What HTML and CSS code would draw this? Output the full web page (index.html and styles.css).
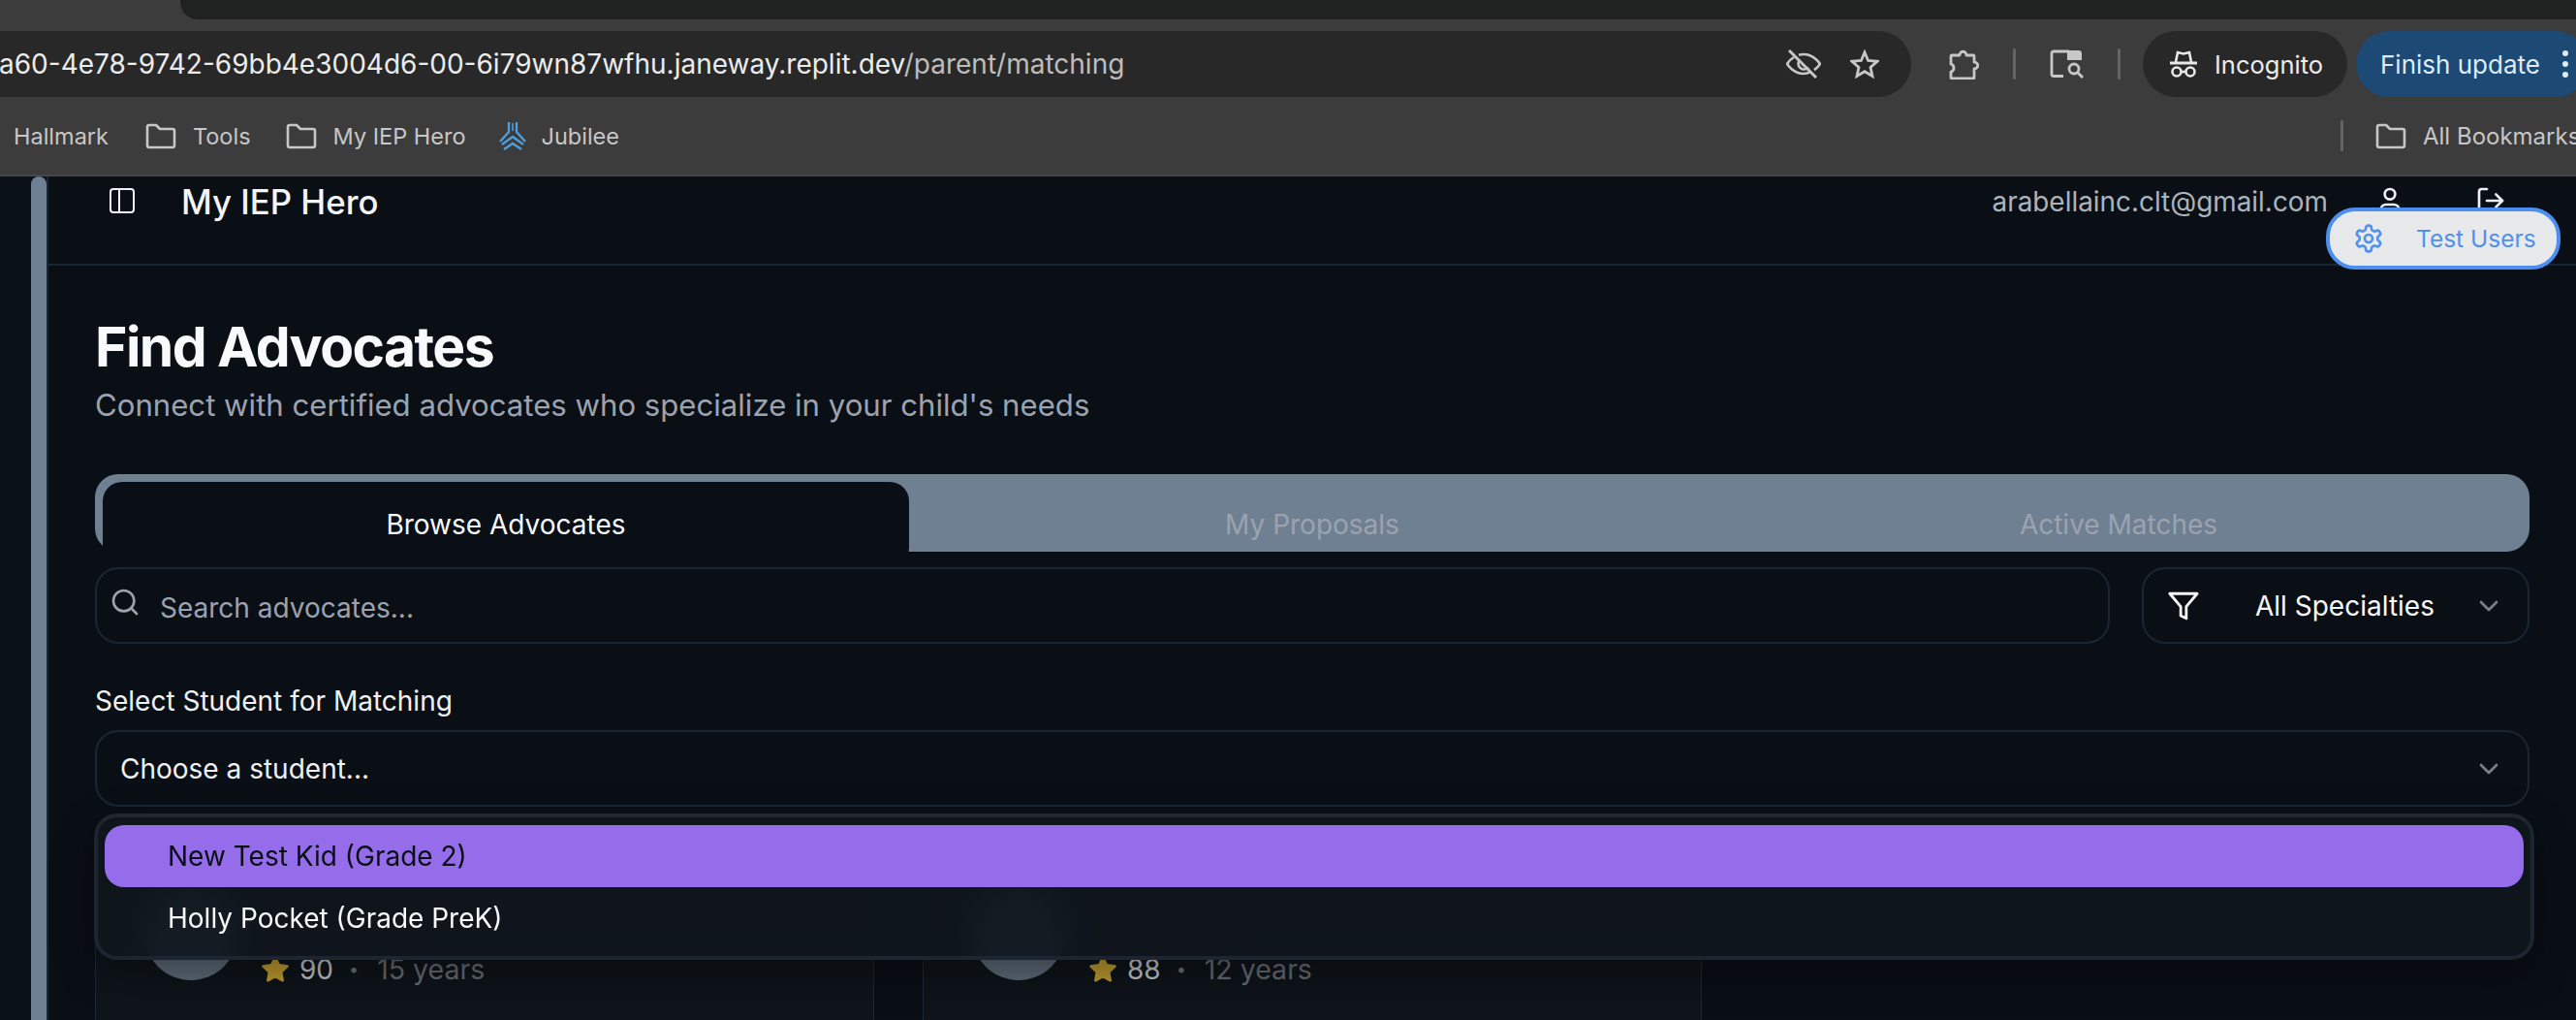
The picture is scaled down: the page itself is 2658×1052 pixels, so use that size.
FILE: index.html
```html
<!DOCTYPE html>
<html>
  <head>
    <title>Find Advocates - My IEP Hero</title>
    <meta name="viewport" content="width=device-width, initial-scale=1.0" />
    <link rel="stylesheet" href="styles.css">
  </head>
  <body>
    <div class="browser">
      <div class="tabstrip"><div class="activeTab"></div></div>
      <div class="toolbar">
        <div class="address">
          <span class="url">a60-4e78-9742-69bb4e3004d6-00-6i79wn87wfhu.janeway.replit.dev<span class="urlPath">/parent/matching</span></span>
          <svg class="eyeOff" viewBox="0 0 36 30" fill="none" stroke="#c7c7c7" stroke-width="2.6">
            <path d="M8 8C3 11 1 15 1 15s6 10 17 10c3 0 5-.7 7-1.800M13 5.800C14.500 5.300 16.200 5 18 5c11 0 17 10 17 10s-2 3.500-6 6.200" />
            <path d="M14 10.500a6 6 0 0 0 9 8" />
            <path d="M3 1l28 28" stroke-width="3" />
          </svg>
          <svg class="starIcon" viewBox="0 0 30 30" fill="none" stroke="#c7c7c7" stroke-width="2.800" stroke-linejoin="miter">
            <polygon points="15,3 18.600,11.500 28,12.300 21,18.400 23,27.500 15,22.700 7,27.500 9,18.400 2,12.300 11.400,11.500" />
          </svg>
        </div>
        <svg class="puzzle" viewBox="0 0 32 32" fill="none" stroke="#c7c7c7" stroke-width="2.800" stroke-linejoin="round">
          <path d="M4 7h8c0-5 7-5 7 0h7a1 1 0 0 1 1 1v6c5 0 5 7 0 7v9a1 1 0 0 1-1 1H4a1 1 0 0 1-1-1v-6c4-1 4-7 0-8V8a1 1 0 0 1 1-1z" />
        </svg>
        <div class="toolSep"></div>
        <svg class="sidePanel" viewBox="0 0 35 30" fill="none" stroke="#c7c7c7" stroke-width="2.800">
          <path d="M14 27.500H4a2 2 0 0 1-2-2V4a2 2 0 0 1 2-2h16" />
          <path d="M18 1h12a3 3 0 0 1 3 3v7H18z" fill="#c7c7c7" stroke="none" />
          <circle cx="25" cy="20" r="5" />
          <path d="M29 24l5 5" />
        </svg>
        <div class="toolSep"></div>
        <div class="incognito">
          <svg class="hat" viewBox="0 0 30 30" fill="none" stroke="#e8e8e8" stroke-width="2.600">
            <path d="M7 13l2-10 6 1.500L21 3l2 10" />
            <path d="M1 14h28" stroke-width="3" />
            <circle cx="8" cy="23" r="4.500" />
            <circle cx="22" cy="23" r="4.500" />
            <path d="M12.500 23h5" />
          </svg>
          <span>Incognito</span>
        </div>
        <div class="finishUpdate">
          <span>Finish update</span>
          <span class="dots"><i></i><i></i><i></i></span>
        </div>
      </div>
      <div class="bookmarks">
        <span class="mark firstMark">Hallmark</span>
        <svg class="folder" viewBox="0 0 32 27" fill="none" stroke="#c7c7c7" stroke-width="2.600" stroke-linejoin="round"><path d="M2 4a2 2 0 0 1 2-2h7l4 4h13a2 2 0 0 1 2 2v15a2 2 0 0 1-2 2H4a2 2 0 0 1-2-2z" /></svg>
        <span class="mark">Tools</span>
        <svg class="folder" viewBox="0 0 32 27" fill="none" stroke="#c7c7c7" stroke-width="2.600" stroke-linejoin="round"><path d="M2 4a2 2 0 0 1 2-2h7l4 4h13a2 2 0 0 1 2 2v15a2 2 0 0 1-2 2H4a2 2 0 0 1-2-2z" /></svg>
        <span class="mark">My IEP Hero</span>
        <svg class="jubilee" viewBox="0 0 30 30" fill="none" stroke="#4f9fdc" stroke-width="2.300" stroke-linejoin="miter">
          <path d="M11 1v10L2 21" />
          <path d="M19 1v10l9 10" />
          <path d="M15 2v8" stroke-width="1.600" />
          <path d="M4 24l11-8 11 8" />
          <path d="M6 29l9-6 9 6" />
        </svg>
        <span class="mark">Jubilee</span>
        <div class="markSep"></div>
        <svg class="folder" viewBox="0 0 32 27" fill="none" stroke="#c7c7c7" stroke-width="2.600" stroke-linejoin="round"><path d="M2 4a2 2 0 0 1 2-2h7l4 4h13a2 2 0 0 1 2 2v15a2 2 0 0 1-2 2H4a2 2 0 0 1-2-2z" /></svg>
        <span class="mark">All Bookmarks</span>
      </div>
    </div>

    <div class="page">
      <div class="gutter"><div class="thumb"></div></div>
      <div class="main">
        <header class="topbar">
          <svg class="panelIcon" viewBox="0 0 26 26" fill="none" stroke="#eef0f3" stroke-width="2">
            <rect x="1" y="1" width="24" height="24" rx="3" />
            <path d="M10 1v24" />
          </svg>
          <div class="brand">My IEP Hero</div>
          <div class="email">arabellainc.clt@gmail.com</div>
          <svg class="userIcon" viewBox="0 0 24 24" fill="none" stroke="#eef0f3" stroke-width="2" stroke-linecap="round" stroke-linejoin="round">
            <path d="M19 21v-2a4 4 0 0 0-4-4H9a4 4 0 0 0-4 4v2" />
            <circle cx="12" cy="7" r="4" />
          </svg>
          <svg class="logoutIcon" viewBox="0 0 24 24" fill="none" stroke="#eef0f3" stroke-width="2" stroke-linecap="round" stroke-linejoin="round">
            <path d="M9 21H5a2 2 0 0 1-2-2V5a2 2 0 0 1 2-2h4" />
            <polyline points="16 17 21 12 16 7" />
            <line x1="21" y1="12" x2="9" y2="12" />
          </svg>
          <button class="testUsers">
            <svg viewBox="0 0 24 24" fill="none" stroke="#4f91ef" stroke-width="2" stroke-linecap="round" stroke-linejoin="round">
              <path d="M12.220 2h-.44a2 2 0 0 0-2 2v.18a2 2 0 0 1-1 1.730l-.43.25a2 2 0 0 1-2 0l-.15-.08a2 2 0 0 0-2.730.73l-.22.38a2 2 0 0 0 .73 2.730l.15.1a2 2 0 0 1 1 1.720v.51a2 2 0 0 1-1 1.740l-.15.09a2 2 0 0 0-.73 2.730l.22.38a2 2 0 0 0 2.730.73l.15-.08a2 2 0 0 1 2 0l.43.25a2 2 0 0 1 1 1.730V20a2 2 0 0 0 2 2h.44a2 2 0 0 0 2-2v-.18a2 2 0 0 1 1-1.730l.43-.25a2 2 0 0 1 2 0l.15.08a2 2 0 0 0 2.730-.73l.22-.39a2 2 0 0 0-.73-2.730l-.15-.08a2 2 0 0 1-1-1.740v-.5a2 2 0 0 1 1-1.740l.15-.09a2 2 0 0 0 .73-2.730l-.22-.38a2 2 0 0 0-2.730-.73l-.15.08a2 2 0 0 1-2 0l-.43-.25a2 2 0 0 1-1-1.730V4a2 2 0 0 0-2-2z" />
              <circle cx="12" cy="12" r="3" />
            </svg>
            <span>Test Users</span>
          </button>
        </header>

        <section class="content">
          <h1>Find Advocates</h1>
          <p class="lead">Connect with certified advocates who specialize in your child's needs</p>

          <div class="tabs">
            <div class="tab tabActive">Browse Advocates</div>
            <div class="tab">My Proposals</div>
            <div class="tab">Active Matches</div>
          </div>

          <div class="filters">
            <div class="field searchField">
              <svg class="searchIcon" viewBox="0 0 24 24" fill="none" stroke="#9ca3af" stroke-width="2" stroke-linecap="round" stroke-linejoin="round">
                <circle cx="11" cy="11" r="8" />
                <path d="m21 21-4.300-4.300" />
              </svg>
              <span>Search advocates...</span>
            </div>
            <div class="field specialtyField">
              <svg class="filterIcon" viewBox="0 0 24 24" fill="none" stroke="#f4f5f7" stroke-width="2" stroke-linecap="round" stroke-linejoin="round">
                <polygon points="22 3 2 3 10 12.460 10 19 14 21 14 12.460 22 3" />
              </svg>
              <span class="specialtyText">All Specialties</span>
              <svg class="chevron" viewBox="0 0 24 24" fill="none" stroke="#7b8088" stroke-width="2" stroke-linecap="round" stroke-linejoin="round"><path d="m6 9 6 6 6-6" /></svg>
            </div>
          </div>

          <label class="studentLabel">Select Student for Matching</label>
          <div class="studentPicker">
            <div class="field studentField">
              <span>Choose a student...</span>
              <svg class="chevron" viewBox="0 0 24 24" fill="none" stroke="#7b8088" stroke-width="2" stroke-linecap="round" stroke-linejoin="round"><path d="m6 9 6 6 6-6" /></svg>
            </div>
            <div class="menu">
              <div class="option optionOn">New Test Kid (Grade 2)</div>
              <div class="option">Holly Pocket (Grade PreK)</div>
            </div>
          </div>

          <div class="cards">
            <div class="card">
              <div class="avatar"></div>
              <div class="stats">
                <svg class="scoreStar" viewBox="0 0 24 24"><polygon points="12 2 15.090 8.260 22 9.270 17 14.140 18.180 21.020 12 17.770 5.820 21.020 7 14.140 2 9.270 8.910 8.260 12 2" /></svg>
                <span class="score">90</span>
                <span class="sep">•</span>
                <span class="years">15 years</span>
              </div>
            </div>
            <div class="card">
              <div class="avatar"></div>
              <div class="stats">
                <svg class="scoreStar" viewBox="0 0 24 24"><polygon points="12 2 15.090 8.260 22 9.270 17 14.140 18.180 21.020 12 17.770 5.820 21.020 7 14.140 2 9.270 8.910 8.260 12 2" /></svg>
                <span class="score">88</span>
                <span class="sep">•</span>
                <span class="years">12 years</span>
              </div>
            </div>
          </div>
        </section>
      </div>
    </div>
  </body>
</html>
```

FILE: styles.css
```css
* {
  box-sizing: border-box;
}
html,
body {
  margin: 0;
  height: 1052px;
  overflow: hidden;
}
body {
  background-color: #0a0f16;
  font-family: Inter, "Liberation Sans", sans-serif;
}
svg {
  display: block;
  flex: none;
}

/* browser chrome */
.browser {
  background-color: #3c3c3c;
  height: 182px;
  border-bottom: 2px solid #474747;
  overflow: hidden;
}
.tabstrip {
  height: 20px;
  padding-left: 186px;
}
.activeTab {
  height: 20px;
  background-color: #202221;
  border-bottom-left-radius: 18px;
}
.toolbar {
  display: flex;
  align-items: center;
  height: 80px;
  padding-top: 12px;
  white-space: nowrap;
}
.address {
  display: flex;
  align-items: center;
  flex: none;
  width: 1972px;
  height: 68px;
  background-color: #282828;
  border-radius: 0 34px 34px 0;
  padding-right: 33px;
}
.url {
  flex: 1;
  margin-left: -1px;
  font-size: 28px;
  color: #ececec;
}
.urlPath {
  color: #bdbdbd;
}
.eyeOff {
  width: 36px;
  height: 30px;
}
.starIcon {
  width: 30px;
  height: 30px;
  margin-left: 30px;
}
.puzzle {
  width: 32px;
  height: 32px;
  margin-left: 38px;
}
.toolSep {
  flex: none;
  width: 3px;
  height: 32px;
  border-radius: 2px;
  background-color: #646464;
  margin-left: 35px;
}
.sidePanel {
  width: 35px;
  height: 30px;
  margin-left: 35px;
}
.incognito {
  display: flex;
  align-items: center;
  flex: none;
  gap: 17px;
  width: 211px;
  height: 68px;
  margin-left: 23px;
  padding-left: 27px;
  border-radius: 34px;
  background-color: #282828;
  color: #ececec;
  font-size: 25.5px;
}
.hat {
  width: 30px;
  height: 30px;
}
.finishUpdate {
  display: flex;
  align-items: center;
  flex: none;
  width: 240px;
  height: 68px;
  margin-left: 9px;
  padding-left: 25px;
  border-radius: 34px;
  background-color: #1c4a74;
  color: #dfeaf5;
  font-size: 26px;
}
.dots {
  display: flex;
  flex-direction: column;
  gap: 5px;
  margin-left: 23px;
}
.dots i {
  display: block;
  width: 6px;
  height: 6px;
  border-radius: 50%;
  background-color: #dfeaf5;
}
.bookmarks {
  display: flex;
  align-items: center;
  height: 80px;
  white-space: nowrap;
  color: #c7c7c7;
  font-size: 23.5px;
}
.mark {
  margin-left: 17px;
}
.firstMark {
  margin: 0 2px 0 14px;
}
.folder {
  width: 32px;
  height: 27px;
  margin-left: 36px;
}
.jubilee {
  width: 30px;
  height: 30px;
  margin-left: 33px;
}
.jubilee + .mark {
  margin-left: 15px;
}
.markSep {
  flex: none;
  width: 3px;
  height: 32px;
  margin-left: auto;
  border-radius: 2px;
  background-color: #646464;
}
.markSep + .folder {
  margin-left: 33px;
}
.bookmarks .mark:last-child {
  width: 158px;
  flex: none;
  overflow: hidden;
  font-size: 24px;
}

/* app */
.page {
  display: flex;
  height: 870px;
}
.gutter {
  flex: none;
  width: 48px;
  padding-left: 32px;
  background-color: #0a1118;
}
.thumb {
  height: 100%;
  background-color: #6f8092;
  border-radius: 8px 8px 0 0;
}
.main {
  flex: 1;
  min-width: 0;
  border-left: 2px solid #1a2634;
}
.topbar {
  position: relative;
  display: flex;
  align-items: flex-start;
  height: 92px;
  padding: 12px 0 0 63px;
  border-bottom: 2px solid #1a2634;
}
.panelIcon {
  width: 26px;
  height: 26px;
}
.brand {
  margin: -8px 0 0 48px;
  font-size: 34.8px;
  line-height: 44px;
  font-weight: 500;
  color: #f4f5f7;
}
.email {
  margin: -3px 0 0 auto;
  font-size: 27.9px;
  line-height: 34px;
  color: #adb3bb;
}
.userIcon {
  width: 32px;
  height: 32px;
  margin: -3px 0 0 48px;
}
.logoutIcon {
  width: 32px;
  height: 32px;
  margin: -3px 72px 0 72px;
}
/* floats over the header */
.testUsers {
  position: absolute;
  top: 32px;
  right: 16px;
  display: flex;
  align-items: center;
  gap: 33px;
  width: 242px;
  height: 64px;
  padding: 0 0 0 24px;
  border: 4px solid #4b8ff0;
  border-radius: 30px;
  background-color: #e8e9ea;
  color: #4f91ef;
  font-family: inherit;
  font-size: 24.5px;
}
.testUsers svg {
  width: 32px;
  height: 32px;
}
.content {
  padding: 0 48px;
}
h1 {
  margin: 49px 0 0;
  font-size: 57px;
  line-height: 70px;
  font-weight: 700;
  letter-spacing: -1.57px;
  color: #f8f9fa;
}
.lead {
  margin: 5px 0 0;
  font-size: 31.15px;
  line-height: 40px;
  color: #9ca3af;
}
.tabs {
  display: flex;
  height: 80px;
  margin-top: 51px;
  padding: 8px 8px 0;
  border-radius: 24px;
  background-color: #6f8092;
}
.tab {
  flex: 1;
  padding-top: 27px;
  height: 88px;
  text-align: center;
  font-size: 28px;
  line-height: 34px;
  color: #9ca3af;
}
.tabActive {
  flex: none;
  width: 832px;
  border-radius: 20px;
  background-color: #0a0f16;
  color: #f8f9fa;
}
.filters {
  display: flex;
  gap: 33px;
  margin-top: 16px;
}
.field {
  display: flex;
  align-items: center;
  height: 79px;
  border: 2px solid #1a2634;
  border-radius: 24px;
  font-size: 28px;
}
.searchField {
  flex: 1;
  position: relative;
  padding: 4px 0 0 65px;
  color: #9ca3af;
}
.searchIcon {
  position: absolute;
  left: 13px;
  top: 18px;
  width: 32px;
  height: 32px;
}
.specialtyField {
  flex: none;
  width: 400px;
  padding: 0 24px 0 24px;
  color: #f8f9fa;
}
.filterIcon {
  width: 34px;
  height: 34px;
}
.specialtyText {
  margin-left: 57px;
}
.chevron {
  width: 32px;
  height: 32px;
  margin-left: auto;
}
.studentLabel {
  display: block;
  margin-top: 42px;
  font-size: 28px;
  line-height: 34px;
  color: #f0f1f3;
}
.studentPicker {
  position: relative;
  margin-top: 13px;
}
.studentField {
  padding: 0 24px 0 24px;
  color: #f0f1f3;
}
/* open select menu, blurs what is under it */
.menu {
  position: absolute;
  z-index: 2;
  top: 86px;
  left: -1px;
  right: -5px;
  height: 151px;
  padding: 8px 7px 0;
  border: 4px solid #1c2530;
  border-top-color: #22272d;
  border-radius: 24px;
  background-color: rgba(15, 21, 28, 0.93);
  backdrop-filter: blur(14px);
  box-shadow: 0 14px 40px rgba(0, 0, 0, 0.4);
}
.option {
  display: flex;
  align-items: center;
  height: 64px;
  padding-left: 65px;
  border-radius: 20px;
  font-size: 28px;
  color: #f8f9fa;
}
.optionOn {
  background-color: #956dea;
  color: #0a0f16;
}
.cards {
  display: flex;
  gap: 50px;
  height: 200px;
  margin-top: 50px;
}
.card {
  position: relative;
  flex: none;
  width: 804px;
  border: 1px solid #1d2733;
  background-color: #0e141a;
}
.avatar {
  position: absolute;
  left: 50px;
  top: 32px;
  width: 96px;
  height: 96px;
  border-radius: 50%;
  background-color: #5c6a78;
}
.stats {
  position: absolute;
  left: 170px;
  top: 100px;
  display: flex;
  align-items: center;
  font-size: 28px;
  line-height: 34px;
}
.scoreStar {
  width: 30px;
  height: 30px;
  fill: #bd9c31;
  stroke: #bd9c31;
  stroke-width: 2;
  stroke-linejoin: round;
}
.score {
  margin-left: 10px;
  color: #c3c6cb;
}
.sep {
  margin: 0 19px 0 16px;
  font-size: 18px;
  color: #6a6f77;
}
.years {
  font-size: 28.5px;
  color: #676c74;
}
```
